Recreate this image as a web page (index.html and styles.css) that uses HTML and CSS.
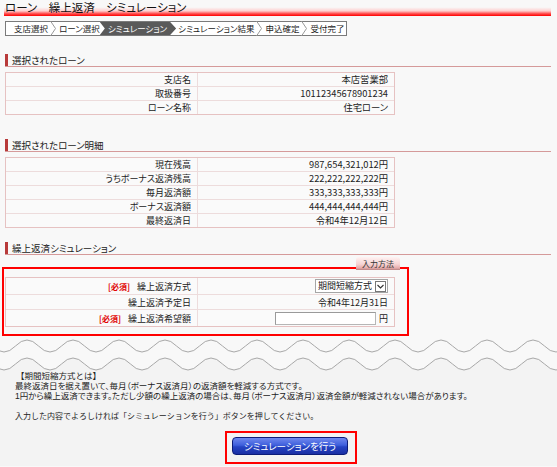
FILE: index.html
```html
<!DOCTYPE html>
<html lang="ja">
<head>
<meta charset="utf-8">
<title>ローン 繰上返済 シミュレーション</title>
<link rel="stylesheet" href="styles.css">
</head>
<body>
<main class="page">
  <h1 class="title">ローン　繰上返済　シミュレーション</h1>
  <ol class="steps">
    <li>支店選択<svg class="chev" viewBox="0 0 6 15" width="6" height="15"><path d="M0.5 0 L5.5 7.5 L0.5 15" fill="none" stroke="#9a9a9a"/></svg></li>
    <li>ローン選択</li>
    <li class="current">シミュレーション</li>
    <li>シミュレーション結果<svg class="chev" viewBox="0 0 6 15" width="6" height="15"><path d="M0.5 0 L5.5 7.5 L0.5 15" fill="none" stroke="#9a9a9a"/></svg></li>
    <li>申込確定<svg class="chev" viewBox="0 0 6 15" width="6" height="15"><path d="M0.5 0 L5.5 7.5 L0.5 15" fill="none" stroke="#9a9a9a"/></svg></li>
    <li>受付完了</li>
  </ol>

  <section class="sec sec-loan">
    <h2 class="sec-title"><span>選択されたローン</span></h2>
    <table class="grid">
      <tr><th>支店名</th><td>本店営業部</td></tr>
      <tr><th>取扱番号</th><td>10112345678901234</td></tr>
      <tr><th>ローン名称</th><td>住宅ローン</td></tr>
    </table>
  </section>

  <section class="sec sec-detail">
    <h2 class="sec-title"><span>選択されたローン明細</span></h2>
    <table class="grid">
      <tr><th>現在残高</th><td>987,654,321,012円</td></tr>
      <tr><th>うちボーナス返済残高</th><td>222,222,222,222円</td></tr>
      <tr><th>毎月返済額</th><td>333,333,333,333円</td></tr>
      <tr><th>ボーナス返済額</th><td>444,444,444,444円</td></tr>
      <tr><th>最終返済日</th><td>令和4年12月12日</td></tr>
    </table>
  </section>

  <section class="sec sec-sim">
    <h2 class="sec-title"><span>繰上返済シミュレーション</span></h2>
    <div class="method-row"><button type="button" class="method-btn">入力方法</button></div>
    <div class="highlight">
      <table class="grid form-grid">
        <tr class="r-select"><th><span class="req">[必須]</span>繰上返済方式</th>
          <td><span class="select-wrap"><select class="select"><option>期間短縮方式</option></select><span class="select-arrow"><svg viewBox="0 0 9 9" width="9" height="9"><path d="M1.5 3 L4.5 6 L7.5 3" fill="none" stroke="#333" stroke-width="1.1"/></svg></span></span></td></tr>
        <tr class="r-date"><th>繰上返済予定日</th><td>令和4年12月31日</td></tr>
        <tr class="r-input"><th><span class="req">[必須]</span>繰上返済希望額</th>
          <td><input class="amount" type="text" aria-label="繰上返済希望額"><span class="yen">円</span></td></tr>
      </table>
    </div>
  </section>
</main>

<div class="waves">
  <svg viewBox="0 0 557 35" width="557" height="35">
    <path d="M-30.5 28 q11.5 -12 23 0 t23 0 t23 0 t23 0 t23 0 t23 0 t23 0 t23 0 t23 0 t23 0 t23 0 t23 0 t23 0 t23 0 t23 0 t23 0 t23 0 t23 0 t23 0 t23 0 t23 0 t23 0 t23 0 t23 0 t23 0 t23 0 t23 0 V35 H-31 Z" fill="#f3f3f3"/>
    <path d="M-30.5 10 q11.5 -12 23 0 t23 0 t23 0 t23 0 t23 0 t23 0 t23 0 t23 0 t23 0 t23 0 t23 0 t23 0 t23 0 t23 0 t23 0 t23 0 t23 0 t23 0 t23 0 t23 0 t23 0 t23 0 t23 0 t23 0 t23 0 t23 0 t23 0" fill="none" stroke="#a8a8a8" stroke-width="1"/>
    <path d="M-30.5 28 q11.5 -12 23 0 t23 0 t23 0 t23 0 t23 0 t23 0 t23 0 t23 0 t23 0 t23 0 t23 0 t23 0 t23 0 t23 0 t23 0 t23 0 t23 0 t23 0 t23 0 t23 0 t23 0 t23 0 t23 0 t23 0 t23 0 t23 0 t23 0" fill="none" stroke="#a8a8a8" stroke-width="1"/>
  </svg>
</div>

<section class="notes">
  <p class="note-head">【期間短縮方式とは】</p>
  <p>最終返済日を据え置いて、毎月（ボーナス返済月）の返済額を軽減する方式です。</p>
  <p>1円から繰上返済できます。ただし少額の繰上返済の場合は、毎月（ボーナス返済月）返済金額が軽減されない場合があります。</p>
  <p class="note-confirm">入力した内容でよろしければ「シミュレーションを行う」ボタンを押してください。</p>
  <div class="submit-box"><button type="button" class="submit-btn">シミュレーションを行う</button></div>
</section>
</body>
</html>
```

FILE: styles.css
```css
* { box-sizing: border-box; }
html, body { margin: 0; padding: 0; }
body {
  background: #f8f8f8;
  color: #222;
  font-family: "Noto Sans CJK JP", "Noto Sans", sans-serif;
  font-size: 9px;
  font-feature-settings: "palt";
  width: 557px;
  height: 467px;
  overflow: hidden;
}

.page { padding: 0 6px 0 5px; }

.title {
  margin: 0 0 0 -1px;
  height: 16px;
  padding-left: 1px;
  font-size: 11.5px;
  font-weight: normal;
  line-height: 14px;
  color: #111;
  background: linear-gradient(to bottom, rgba(255,255,255,0) 0, rgba(255,255,255,0) 45%, #ffd0d0 68%, #ff4a4a 86%, #ff0000 100%);
}

/* breadcrumb */
.steps {
  display: inline-flex;
  margin: 5px 0 0;
  padding: 0 0 0 8px;
  list-style: none;
  height: 15px;
  border: 1px solid #7a7a7a;
  background: #fff;
}
.steps li {
  display: flex;
  align-items: center;
  gap: 2px;
  font-size: 8.5px;
  line-height: 13px;
  white-space: nowrap;
}
.steps li + li { margin-left: 2px; }
.steps .chev { display: block; margin-right: 1px; }
.steps li.current {
  margin-left: 0;
  padding: 0 9px 0 8px;
  background: #5a5a5a;
  color: #fff;
  clip-path: polygon(0 0, calc(100% - 6px) 0, 100% 50%, calc(100% - 6px) 100%, 0 100%, 5px 50%);
}
.steps li.current + li { margin-left: 2px; }
.steps li:last-child { padding-right: 1px; }

/* sections */
.sec-title {
  margin: 0;
  font-size: 9.5px;
  font-weight: normal;
  line-height: 12px;
  border-bottom: 1px solid #d59a9a;
}
.sec-title span {
  display: block;
  border-left: 3px solid #b83a3a;
  padding-left: 4px;
}
.sec-loan { margin-top: 18px; }
.sec-detail { margin-top: 24px; }
.sec-sim { margin-top: 14px; }

.grid {
  width: 390px;
  margin-top: 5px;
  border-collapse: separate;
  border-spacing: 0;
  border: 1px solid #e6c2c2;
  background: #fafafa;
}
.grid th, .grid td {
  padding: 0 6px 0 4px;
  text-align: right;
  font-weight: normal;
  line-height: 13px;
  border-bottom: 1px solid #eddcdc;
  white-space: nowrap;
}
.grid th { width: 192px; border-right: 1px solid #eddcdc; }
.grid td { font-size: 9.3px; }
.grid tr:last-child th, .grid tr:last-child td { border-bottom: 0; }

/* simulation input */
.method-row {
  width: 395px;
  margin-top: 2px;
  display: flex;
  justify-content: flex-end;
}
.method-btn {
  width: 44px;
  height: 13px;
  padding: 0;
  border: 0;
  border-radius: 3px 3px 0 0;
  font: inherit;
  font-size: 8px;
  line-height: 12px;
  color: #333;
  background: linear-gradient(to bottom, #fff2f2 0, #f6d4d4 55%, #e6aaaa 85%, #b88080 100%);
}
.highlight {
  margin: -3px 0 0 -3px;
  width: 407px;
  padding: 8px 13px 7px 1px;
  border: 2px solid #ff0000;
}
.highlight .grid { margin-top: 0; }
.form-grid .r-select th, .form-grid .r-select td { height: 17px; }
.form-grid .r-date th, .form-grid .r-date td { height: 15px; }
.form-grid .r-input th, .form-grid .r-input td { height: 16px; }
.form-grid td { padding-right: 6px; font-size: 9px; }
.req {
  color: #e00000;
  font-weight: bold;
  font-size: 8px;
  margin-right: 7px;
}
.select-wrap {
  display: inline-flex;
  align-items: center;
  vertical-align: middle;
  height: 14px;
  border: 1px solid #a6a6a6;
  background: #fff;
  padding-right: 1px;
}
.select {
  appearance: none;
  -webkit-appearance: none;
  border: 0;
  background: transparent;
  font: inherit;
  font-size: 9px;
  line-height: 12px;
  height: 12px;
  padding: 0 3px 0 2px;
  color: #222;
  width: 59px;
}
.select-arrow {
  display: flex;
  align-items: center;
  justify-content: center;
  width: 11px;
  height: 11px;
  border: 1px solid #777;
  background: #fff;
}
.select-arrow svg { display: block; }
.amount {
  width: 101px;
  height: 13px;
  vertical-align: middle;
  border: 1px solid #b6b6b6;
  border-top-color: #9a9a9a;
  border-left-color: #9a9a9a;
  background: #fff;
  padding: 0;
  margin: 0 3px 0 0;
}
.yen { vertical-align: middle; }

/* waves + notes */
.waves svg { display: block; }
.notes {
  background: #f3f3f3;
  padding: 0 0 10px 15px;
  height: 95px;
}
.notes p {
  margin: 0;
  font-family: "Liberation Sans", "Noto Sans CJK JP", sans-serif;
  font-size: 8.5px;
  line-height: 10px;
  white-space: nowrap;
}
.notes .note-head { font-feature-settings: normal; margin-left: 1px; }
.notes .note-confirm { margin-top: 11px; font-feature-settings: normal; font-size: 8px; }
.submit-box {
  margin: 9px 0 0 210px;
  width: 132px;
  height: 33px;
  padding: 4px 7px 5px 5px;
  border: 2px solid #ff0000;
}
.submit-btn {
  display: block;
  width: 116px;
  height: 18px;
  padding: 0;
  border: 1px solid #0c1c78;
  border-radius: 4px;
  font: inherit;
  font-size: 9.5px;
  line-height: 16px;
  color: #fff;
  background: linear-gradient(to bottom, #6f88ee 0, #3f5fdc 45%, #2644c4 55%, #1a2fa4 100%);
}
```
